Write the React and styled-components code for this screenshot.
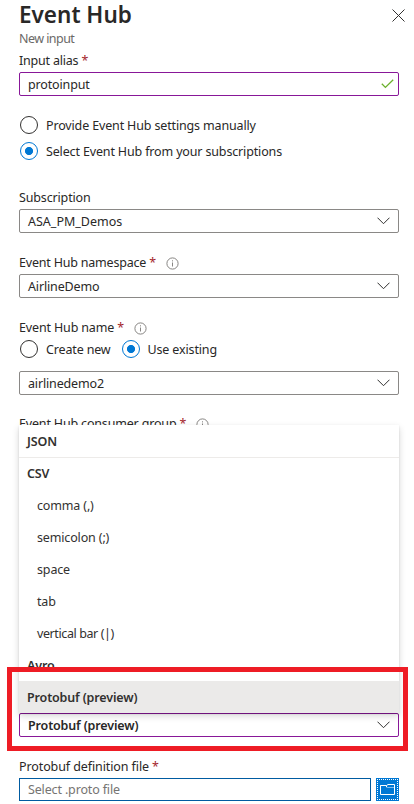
import React from "react";
import styled, { createGlobalStyle, css } from "styled-components";

const GlobalStyle = createGlobalStyle`
  * { box-sizing: border-box; }
  body {
    margin: 0;
    background: #fff;
    color: #292827;
    font-family: "Noto Sans", "Open Sans", sans-serif;
    font-size: 12.5px;
    overflow: hidden;
  }
`;

const Panel = styled.main`
  position: relative;
  width: 414px;
  height: 804px;
  padding: 0 15px 0 19px;
  overflow: hidden;
  display: flex;
  flex-direction: column;
`;

const Header = styled.header`
  display: flex;
  justify-content: space-between;
  height: 31px;
  flex: none;
`;

const Title = styled.h1`
  margin: 0;
  font-size: 22.5px;
  font-weight: 600;
  line-height: 30px;
  white-space: nowrap;
`;

const CloseButton = styled.button`
  border: 0;
  padding: 0;
  margin: 9px -6px 0 0;
  width: 13px;
  height: 13px;
  background: none;

  svg {
    display: block;
  }
`;

const Subtitle = styled.div`
  height: 20px;
  flex: none;
  line-height: 16px;
  color: #6b6967;
`;

const Text = styled.span`
  white-space: nowrap;
  letter-spacing: ${(p) => p.$ls ?? -0.15}px;
`;

const Field = styled.section`
  flex: none;
  display: flex;
  flex-direction: column;
  height: ${(p) => p.$h}px;
`;

const Label = styled.label`
  display: flex;
  align-items: center;
  flex: none;
  height: 21px;
  line-height: 18px;
  padding-bottom: 1px;
`;

const Star = styled.span`
  color: #a4262c;
  margin-left: 3px;
`;

const Info = styled.svg`
  margin: 0 0 0 10px;
`;

const Box = styled.div`
  position: relative;
  flex: none;
  display: flex;
  align-items: center;
  justify-content: space-between;
  width: ${(p) => p.$w || 380}px;
  height: ${(p) => p.$h || 24}px;
  padding: 0 8px;
  border: 1px solid ${(p) => p.$border || "#8a8886"};
  border-radius: ${(p) => (p.$square ? 0 : 2)}px;
  font-weight: ${(p) => (p.$bold ? 600 : 400)};
  color: ${(p) => p.$color || "#292827"};
`;

const Check = styled.svg`
  margin-right: -4px;
`;

const Radios = styled.div`
  display: flex;
  flex-direction: ${(p) => (p.$column ? "column" : "row")};
  gap: ${(p) => (p.$column ? 8 : 11)}px;
  padding-left: 1px;
  margin: ${(p) => (p.$column ? "0" : "1px 0 13px")};
`;

const RadioRow = styled.label`
  display: flex;
  align-items: center;
  gap: 8px;
  height: 18px;
`;

const Dot = styled.span`
  width: 18px;
  height: 18px;
  flex: none;
  border-radius: 50%;
  border: 1px solid #323130;
  ${(p) =>
    p.$on &&
    css`
      border-color: #0078d4;
      background: radial-gradient(circle, #0078d4 3.7px, #fff 4.4px);
    `}
`;

const Menu = styled.div`
  position: absolute;
  z-index: 2;
  left: -1px;
  right: -1px;
  bottom: 23px;
  background: #fff;
  box-shadow: 0 3px 7px rgba(0, 0, 0, 0.16), 0 1px 2px rgba(0, 0, 0, 0.1);
  color: #323130;
`;

const Option = styled.div`
  height: 32px;
  line-height: 34px;
  padding-left: ${(p) => (p.$sub ? 18 : 8)}px;
  font-weight: ${(p) => (p.$sub ? 400 : 600)};
  background: ${(p) => (p.$active ? "#ebeae9" : "transparent")};
  box-shadow: ${(p) => (p.$line ? "0 1px 0 #edebe9" : "none")};
`;

/* Callout frame around the chosen format. */
const Highlight = styled.div`
  position: absolute;
  z-index: 3;
  left: 7px;
  top: 667px;
  width: 401px;
  height: 84px;
  border: 5px solid #ee1c25;
  pointer-events: none;
`;

const FileRow = styled.div`
  display: flex;
  gap: 5px;
`;

const FolderButton = styled.button`
  display: flex;
  align-items: center;
  justify-content: center;
  width: 23px;
  height: 23px;
  padding: 0;
  border: 0;
  background: #0078d4;
`;

const InfoIcon = () => (
  <Info width="13" height="13" viewBox="0 0 13 13" fill="none">
    <circle cx="6.5" cy="6.5" r="5.6" stroke="#797775" strokeWidth="0.9" />
    <path d="M6.5 5.5v4M6.5 3.3v1.1" stroke="#797775" strokeWidth="0.9" />
  </Info>
);

const Chevron = () => (
  <svg width="13" height="8" viewBox="0 0 13 8" fill="none">
    <path d="M.5 .7L6.5 6.7L12.5 .7" stroke="#323130" strokeWidth="1" />
  </svg>
);

const FolderIcon = () => (
  <svg width="23" height="23" viewBox="0 0 23 23" fill="none">
    <path
      d="M1 1.5h21M1 21.5h21M1.5 1v21M21.5 1v21"
      stroke="#fff"
      strokeDasharray="1 1"
    />
    <path d="M11.5 9.5h7" stroke="#83bdec" />
    <path
      d="M4.5 7.5h6l1.5-1h6.5v10h-14zM4.5 7.5h5.5l1 2"
      stroke="#fff"
    />
  </svg>
);

const FieldLabel = ({ children, ls, required, info }) => (
  <Label>
    <Text $ls={ls}>{children}</Text>
    {required && <Star>*</Star>}
    {info && <InfoIcon />}
  </Label>
);

const Radio = ({ children, on, ls }) => (
  <RadioRow>
    <Dot $on={on} />
    <Text $ls={ls}>{children}</Text>
  </RadioRow>
);

const Select = ({ children, ls, menu, ...rest }) => (
  <Box {...rest}>
    <Text $ls={ls}>{children}</Text>
    <Chevron />
    {menu}
  </Box>
);

const options = [
  { text: "JSON", line: true },
  { text: "CSV" },
  { text: "comma (,)", sub: true },
  { text: "semicolon (;)", sub: true },
  { text: "space", sub: true },
  { text: "tab", sub: true },
  { text: "vertical bar (|)", sub: true, ls: -0.4 },
  { text: "Avro" },
  { text: "Protobuf (preview)", active: true },
];

const FormatMenu = () => (
  <Menu>
    {options.map((o) => (
      <Option key={o.text} $sub={o.sub} $active={o.active} $line={o.line}>
        <Text $ls={o.ls}>{o.text}</Text>
      </Option>
    ))}
  </Menu>
);

export default function App() {
  return (
    <>
      <GlobalStyle />
      <Panel>
        <Header>
          <Title>Event Hub</Title>
          <CloseButton aria-label="Close">
            <svg width="13" height="13" viewBox="0 0 13 13" fill="none">
              <path d="M.5 .5L12.5 12.5M12.5 .5L.5 12.5" stroke="#323130" strokeWidth="1" />
            </svg>
          </CloseButton>
        </Header>
        <Subtitle>
          <Text $ls={-0.55}>New input</Text>
        </Subtitle>
        <Field $h={65}>
          <FieldLabel required ls={-0.2}>Input alias</FieldLabel>
          <Box $border="#881798">
            <Text>protoinput</Text>
            <Check width="13" height="10" viewBox="0 0 13 10" fill="none">
              <path d="M.8 4.8L4.4 8.4L12.2 .8" stroke="#6bb02c" strokeWidth="1.3" />
            </Check>
          </Box>
        </Field>
        <Field $h={72}>
          <Radios $column>
            <Radio>Provide Event Hub settings manually</Radio>
            <Radio on>Select Event Hub from your subscriptions</Radio>
          </Radios>
        </Field>
        <Field $h={65}>
          <FieldLabel>Subscription</FieldLabel>
          <Select ls={0}>ASA_PM_Demos</Select>
        </Field>
        <Field $h={65}>
          <FieldLabel required info ls={-0.2}>Event Hub namespace</FieldLabel>
          <Select>AirlineDemo</Select>
        </Field>
        <Field $h={96}>
          <FieldLabel required info ls={-0.15}>Event Hub name</FieldLabel>
          <Radios>
            <Radio>Create new</Radio>
            <Radio on>Use existing</Radio>
          </Radios>
          <Select>airlinedemo2</Select>
        </Field>
        <Field $h={278}>
          <FieldLabel required info ls={-0.17}>Event Hub consumer group</FieldLabel>
        </Field>
        <Field $h={65}>
          <FieldLabel />
          <Select $bold $border="#881798" menu={<FormatMenu />}>
            Protobuf (preview)
          </Select>
        </Field>
        <Field $h={47}>
          <FieldLabel required ls={-0.1}>Protobuf definition file</FieldLabel>
          <FileRow>
            <Box $w={352} $h={23} $square $border="#005ba1" $color="#767472">
              <Text>Select .proto file</Text>
            </Box>
            <FolderButton aria-label="Browse">
              <FolderIcon />
            </FolderButton>
          </FileRow>
        </Field>
        <Highlight />
      </Panel>
    </>
  );
}
